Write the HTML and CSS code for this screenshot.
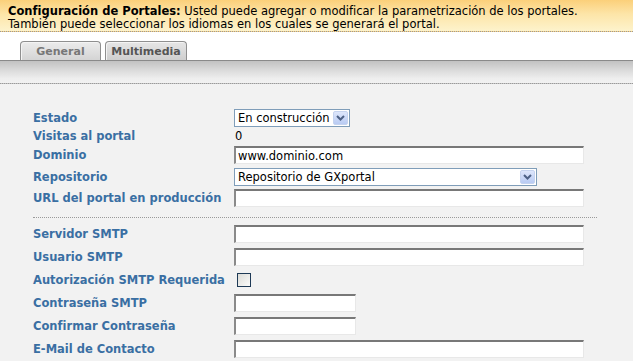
FILE: index.html
```html
<!DOCTYPE html>
<html lang="es">
<head>
<meta charset="utf-8">
<title>Configuración de Portales</title>
<link rel="stylesheet" href="styles.css">
</head>
<body>
<div class="info">
  <p><b>Configuración de Portales:</b> Usted puede agregar o modificar la parametrización de los portales.</p>
  <p>También puede seleccionar los idiomas en los cuales se generará el portal.</p>
</div>
<div class="tabbar">
  <div class="tab tab-active">General</div>
  <div class="tab">Multimedia</div>
</div>
<div class="band"></div>
<div class="form">
  <div class="row r-estado">
    <label class="lbl">Estado</label>
    <div class="select sel-estado"><span class="sel-val">En construcción</span><span class="arrow"><svg width="9" height="6" viewBox="0 0 9 6"><path d="M1 1 L4.5 4.5 L8 1" fill="none" stroke="#4d6185" stroke-width="2"/></svg></span></div>
  </div>
  <div class="row r-visitas">
    <label class="lbl">Visitas al portal</label>
    <span class="val">0</span>
  </div>
  <div class="row r-dom">
    <label class="lbl">Dominio</label>
    <input class="inp inp-long" type="text" value="www.dominio.com">
  </div>
  <div class="row r-rep">
    <label class="lbl">Repositorio</label>
    <div class="select sel-rep"><span class="sel-val">Repositorio de GXportal</span><span class="arrow"><svg width="9" height="6" viewBox="0 0 9 6"><path d="M1 1 L4.5 4.5 L8 1" fill="none" stroke="#4d6185" stroke-width="2"/></svg></span></div>
  </div>
  <div class="row r-url">
    <label class="lbl">URL del portal en producción</label>
    <input class="inp inp-long" type="text">
  </div>
  <div class="sep"></div>
  <div class="smtp">
    <div class="row r-s">
      <label class="lbl">Servidor SMTP</label>
      <input class="inp inp-long" type="text">
    </div>
    <div class="row r-s">
      <label class="lbl">Usuario SMTP</label>
      <input class="inp inp-long" type="text">
    </div>
    <div class="row r-s">
      <label class="lbl">Autorización SMTP Requerida</label>
      <span class="check"></span>
    </div>
    <div class="row r-s">
      <label class="lbl">Contraseña SMTP</label>
      <input class="inp inp-short" type="password">
    </div>
    <div class="row r-s">
      <label class="lbl">Confirmar Contraseña</label>
      <input class="inp inp-short" type="password">
    </div>
    <div class="row r-s">
      <label class="lbl">E-Mail de Contacto</label>
      <input class="inp inp-long" type="text">
    </div>
  </div>
</div>
</body>
</html>
```
FILE: styles.css
```css
html, body {
  margin: 0;
  padding: 0;
}
body {
  background: #f2f2f2;
  font-family: "DejaVu Sans", Verdana, sans-serif;
  font-size: 11.5px;
  color: #000;
  width: 633px;
  height: 361px;
  overflow: hidden;
}
.info {
  height: 32px;
  box-sizing: border-box;
  padding: 5px 8px 0;
  background: linear-gradient(#fbd07a 0%, #fde5a8 45%, #fdf3cc 100%);
  border-bottom: 1px dotted #9a9a9a;
  line-height: 13px;
}
.info p {
  margin: 0;
  white-space: nowrap;
}
.tabbar {
  height: 29px;
  box-sizing: border-box;
  background: #fff;
  border-bottom: 1px solid #8a8a8a;
  display: flex;
  align-items: flex-end;
  padding-left: 20px;
  gap: 4px;
}
.tab {
  height: 19px;
  box-sizing: border-box;
  border: 1px solid #8f8f8f;
  border-bottom: none;
  border-radius: 4px 4px 0 0;
  box-shadow: inset 1px 1px 0 #f4f4f4;
  background: linear-gradient(#e6e6e6, #cfcfcf);
  font-weight: bold;
  font-size: 11px;
  color: #555;
  padding: 2px 3px 0;
  line-height: 15px;
  width: 82px;
  text-align: center;
}
.tab-active {
  width: 81px;
  color: #777;
  background: linear-gradient(#ececec, #d4d4d4);
}
.band {
  height: 22px;
  background: linear-gradient(#c2c2c2 0%, #dcdcdc 45%, #eeeeee 80%, #f2f2f2 100%);
  border-bottom: 1px dotted #9a9a9a;
}
.form {
  padding: 25px 0 0 33px;
}
.row {
  display: flex;
  align-items: center;
}
.lbl {
  width: 201px;
  flex: none;
  font-weight: bold;
  color: #3a6fa3;
}
.r-estado { height: 18px; }
.r-visitas { height: 15px; margin-top: 1px; }
.r-dom { height: 18px; margin-top: 3px; }
.r-rep { height: 18px; margin-top: 4px; }
.r-url { height: 18px; margin-top: 3px; }
.val {
  padding-left: 1px;
}
.select {
  height: 18px;
  box-sizing: border-box;
  border: 1px solid #7f9db9;
  background: #fff;
  display: flex;
  align-items: center;
  justify-content: space-between;
  padding-left: 3px;
}
.sel-estado { width: 116px; }
.sel-rep { width: 303px; }
.arrow {
  width: 15px;
  height: 14px;
  margin-right: 1px;
  box-sizing: border-box;
  border: 1px solid #c5d3ef;
  border-radius: 2px;
  background: linear-gradient(#dde6fb, #b9cbf3);
  display: flex;
  align-items: center;
  justify-content: center;
}
.inp {
  height: 18px;
  box-sizing: border-box;
  border-style: solid;
  border-width: 2px 1px 1px 2px;
  border-color: #787878 #e8e8e8 #e8e8e8 #8a8a8a;
  background: #fff;
  font-family: "DejaVu Sans", Verdana, sans-serif;
  font-size: 11.5px;
  padding: 0 2px;
  margin: 0;
  outline: none;
}
.inp-long { width: 350px; }
.inp-short { width: 122px; }
.sep {
  width: 564px;
  margin-top: 10px;
  border-top: 1px dotted #9a9a9a;
}
.smtp {
  padding-top: 7px;
  display: flex;
  flex-direction: column;
  gap: 5px;
}
.r-s { height: 18px; }
.check {
  width: 14px;
  height: 14px;
  box-sizing: border-box;
  margin-left: 3px;
  border: 1px solid #1e3a56;
  background: linear-gradient(135deg, #dcdcd7, #fbfbfa);
}
```
